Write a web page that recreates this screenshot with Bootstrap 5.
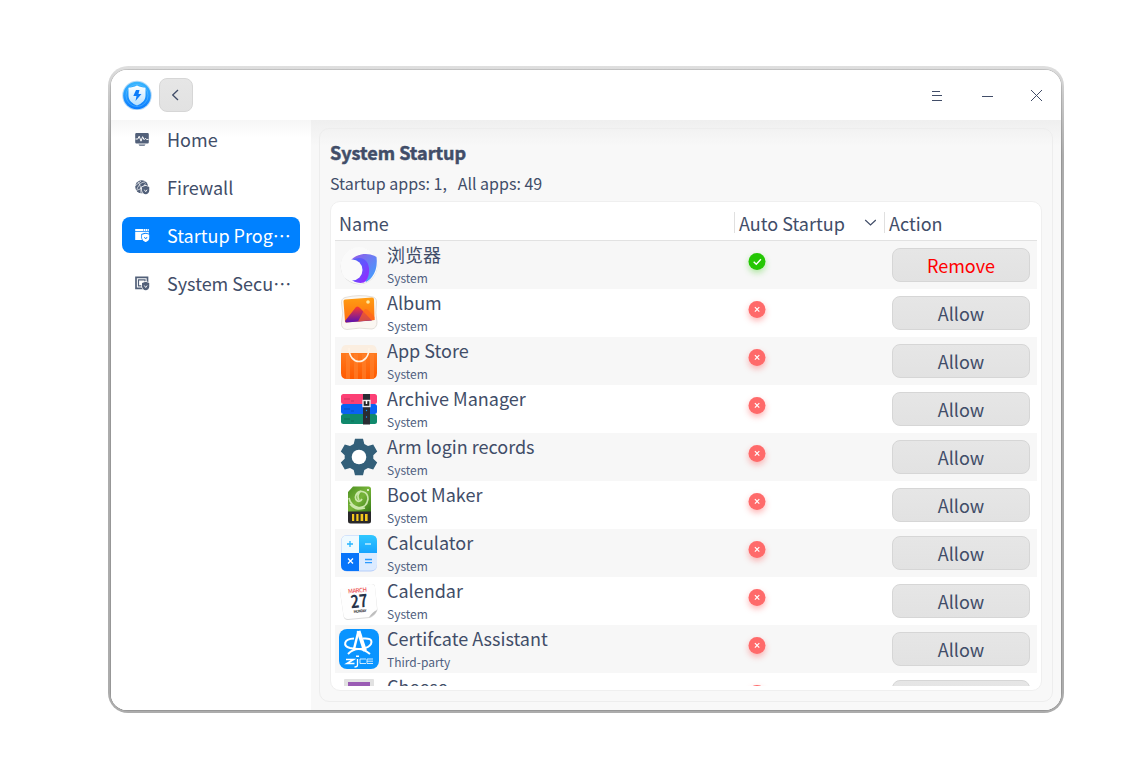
<!DOCTYPE html>
<html lang="en">
<head>
<meta charset="utf-8">
<meta name="viewport" content="width=device-width, initial-scale=1">
<title>System Startup</title>
<link href="https://cdn.jsdelivr.net/npm/bootstrap@5.3.0/dist/css/bootstrap.min.css" rel="stylesheet">
<style>
body{background:#fff;font-family:"Noto Sans CJK SC","Noto Sans",sans-serif;color:#414d68;font-size:18px;height:781px;overflow:hidden}
svg{display:block;flex:none}
.win{width:950px;height:640px;margin:70px 0 0 111px;border-radius:17px;background:#fff;box-shadow:0 0 0 1px rgba(0,0,0,.12)}
.ring{position:absolute;left:108px;top:66px;width:956px;height:647px;border-radius:20px;background:linear-gradient(#dfdfdf 0,#c8c8c8 30px,#acacac 90px,#acacac)}
.win-in{border-radius:16px;overflow:hidden;position:relative;height:640px;background:#f8f8f8}
.titlebar{height:50px;background:#fff;padding-left:11px;position:relative}
.btn-g{background:linear-gradient(#e6e6e6,#e2e2e2);border:1px solid #d6d6d6;border-radius:8px;color:#414d68;padding:0}
.btn-back{width:34px;height:34px;margin-left:7px}
.main{height:590px;background:linear-gradient(#efefef,#f8f8f8 26px)}
.side{width:200px;background:linear-gradient(#f6f6f6,#fff 18px);padding:1px 11px}
.side .nav-link{height:36px;margin-bottom:12px;padding:0 0 0 12px;border-radius:8px;color:#414d68;font-size:18px;line-height:36px;white-space:nowrap}
.side .nav-link.active{background:#0081ff;color:#fff}
.side .nav-link svg{margin:0 17px 0 0}
.pane{margin:8px 8px 8px 8px;width:734px;height:574px;border:1px solid #ededed;border-radius:10px;padding:0 10px}
.pane h1{font-size:18px;font-weight:700;-webkit-text-stroke:.5px #414d68;line-height:28px;margin:9px 0 0}
.sub1{font-size:16px;line-height:24px;margin-top:5px;white-space:pre}
.sheet{width:712px;height:490px;margin-top:6px;border:1px solid #efefef;border-radius:10px;background:#fff;padding:6px 4px 4px}
.thead{height:33px;border-bottom:1px solid #e2e2e2;line-height:31px}
.thead>div{height:32px}
.c1{width:399px;padding-left:4px}.c2{width:150px;padding-left:4px}.c3{padding-left:4px}
.vl{border-left:1px solid #e0e0e0;height:21px!important;margin-top:4px;line-height:23px}
.rows{height:445px;overflow:hidden}
.r{height:48px}
.r:nth-child(odd){background:#f7f7f7}
.nm{width:348px;margin-left:8px}
.nm div{line-height:27px;height:28px}
.nm small{display:block;font-size:12px;line-height:18px;color:#4f5f80}
.ic{width:40px;height:40px;margin:4px 0 0 4px}
.st{width:157px;padding:9px 0 0 10px}
.st svg{overflow:visible}
.ok{filter:drop-shadow(0 3px 3px rgba(40,200,0,.35))}
.no{filter:drop-shadow(0 3px 3px rgba(255,90,90,.45))}
.act{width:138px;height:34px;margin-top:7px;line-height:33px;font-size:18px}
.act.rm,.act.rm:hover{color:#ff0000}
</style>
</head>
<body>
<svg width="0" height="0" class="position-absolute">
<defs>
<symbol id="ok" viewBox="0 0 24 24"><circle cx="12" cy="11.500" r="8.500" fill="#24c703"/><path d="M8.700 11.700l2.600 2.600 4.600-5" fill="none" stroke="#fff" stroke-width="1.400"/></symbol>
<symbol id="no" viewBox="0 0 24 24"><circle cx="12" cy="11.500" r="8.500" fill="#ff6a6a"/><path d="M9.900 9.200l4.400 4.400m0-4.400l-4.400 4.400" fill="none" stroke="#fff" stroke-width="1.200"/></symbol>
<linearGradient id="bl" x2="0" y2="1"><stop stop-color="#38b6ff"/><stop offset="1" stop-color="#0a7cff"/></linearGradient>
<linearGradient id="sh" x2="0" y2="1"><stop stop-color="#fff"/><stop offset="1" stop-color="#b5e0ff"/></linearGradient>
<linearGradient id="pu" x1="0" y1="0" x2="1" y2="1"><stop stop-color="#4b6cf5"/><stop offset=".5" stop-color="#6650ff"/><stop offset="1" stop-color="#a21cff"/></linearGradient>
<linearGradient id="pb" x1="0" y1="0" x2="1" y2="1"><stop stop-color="#9a55e8"/><stop offset="1" stop-color="#38a7ff"/></linearGradient>
<linearGradient id="or" x2="0" y2="1"><stop stop-color="#ff9d12"/><stop offset="1" stop-color="#ff6a12"/></linearGradient>
<linearGradient id="mt" x2="0" y2="1"><stop stop-color="#ff3b2d"/><stop offset="1" stop-color="#5810b5"/></linearGradient>
<linearGradient id="gn" x2="1" y2="1"><stop stop-color="#4c8f20"/><stop offset=".5" stop-color="#78b53a"/><stop offset="1" stop-color="#357a14"/></linearGradient>
<linearGradient id="cb" x2="0" y2="1"><stop stop-color="#31c8ff"/><stop offset="1" stop-color="#18a4ff"/></linearGradient>
<linearGradient id="ba" x2="0" y2="1"><stop stop-color="#ff7a1e"/><stop offset="1" stop-color="#ff5a00"/></linearGradient>
<symbol id="mini" viewBox="0 0 8 9"><path d="M4 0L7.800 1.300V4.500C7.800 6.800 6 8.200 4 9 2 8.200.2 6.800.2 4.500V1.300Z"/></symbol>
</defs>
</svg>
<div class="ring"></div>
<div class="win position-relative">
<div class="win-in">
<header class="titlebar d-flex align-items-center">
<svg width="30" height="30" viewBox="0 0 30 30"><circle cx="15" cy="15.500" r="14.800" fill="#b8daf6"/><circle cx="15" cy="15.500" r="13.800" fill="url(#bl)"/><circle cx="15" cy="15.500" r="11" fill="none" stroke="#75caff" stroke-width=".7" opacity=".6"/><path d="M15 5.500c3 1.500 5.500 2 8.500 2.200V15.500c0 5-4 8.200-8.500 10C10.500 23.700 6.500 20.500 6.500 15.500V7.700C9.500 7.500 12 7 15 5.500Z" fill="url(#sh)"/><path d="M14 10h3.500l-1 4h3L13.500 21l1-5H11.300Z" fill="#0d7dfa"/></svg>
<button class="btn btn-g btn-back d-flex align-items-center justify-content-center" aria-label="Back"><svg width="12" height="14" viewBox="0 0 12 14"><path d="M8 2L2.700 7 8 12" fill="none" stroke="#414d68" stroke-width="1.300"/></svg></button>
<svg class="ms-auto" width="130" height="50" viewBox="0 0 130 50" shape-rendering="crispEdges" fill="#414d68"><path d="M1 21h8v1H1zM1 25h10v1H1zM1 30h10v1H1zM51 26h11v1H51z"/><path d="M100 20l11 11m0-11l-11 11" stroke="#414d68" fill="none" shape-rendering="auto"/></svg>
</header>
<div class="main d-flex">
<nav class="side nav flex-column flex-nowrap">
<a class="nav-link d-flex align-items-center"><svg width="16" height="16" viewBox="0 0 16 16" fill="#526079"><path d="M2.500 2h11a1.300 1.300 0 0 1 1.300 1.300v7.900a1.300 1.300 0 0 1-1.300 1.300h-11a1.300 1.300 0 0 1-1.300-1.300V3.300A1.300 1.300 0 0 1 2.500 2ZM4.500 13.600h7l-1 1.200h-5Z"/><path d="M1.500 8h2.300l1.400-2.800 1.800 5L8.600 5.700l1.500 3 1.200-1.300 1.300 1h1.900" fill="none" stroke="#fff"/></svg>Home</a>
<a class="nav-link d-flex align-items-center"><svg width="16" height="16" viewBox="0 0 16 16"><circle cx="7.700" cy="7.800" r="6.500" fill="#526079"/><path d="M1 7l6-5M3 10c2-5 5-7 8-7M1.500 11.500c5-1 8-3 10-7M4 3c2 2 3 6 3 11" fill="none" stroke="#fff" stroke-width=".7"/><use href="#mini" x="7" y="6" width="9" height="10" fill="#fff"/><use href="#mini" x="7.800" y="6.800" width="7.800" height="8.700" fill="#526079"/><path d="M10.300 10.700l1.400 2 1.400-2" fill="none" stroke="#fff" stroke-width=".9"/></svg>Firewall</a>
<a class="nav-link active d-flex align-items-center"><svg width="16" height="16" viewBox="0 0 16 16"><path d="M1.200 2h13.600v2H1.200zM1.200 4.700h13.600v8.300H1.200z" fill="#fff"/><path d="M9 3h1m1 0h1m1 0h1" stroke="#0081ff"/><use href="#mini" x="7" y="5.500" width="9" height="10" fill="#0081ff"/><use href="#mini" x="7.800" y="6.400" width="7.800" height="8.700" fill="#fff"/><path d="M10.300 10l1.400 2 1.400-2" fill="none" stroke="#0081ff" stroke-width=".9"/></svg>Startup Prog<span lang="zh-CN">…</span></a>
<a class="nav-link d-flex align-items-center"><svg width="16" height="16" viewBox="0 0 16 16"><path d="M2 2.300h11.500v11H2z" fill="none" stroke="#526079" stroke-width="1.700"/><path d="M4.500 4.800h6.500v6H4.500z" fill="none" stroke="#526079" stroke-width="1.200"/><use href="#mini" x="7" y="6" width="9" height="10" fill="#fff"/><use href="#mini" x="7.800" y="6.800" width="7.800" height="8.700" fill="#526079"/><path d="M10.300 10.500l1.400 2 1.400-2" fill="none" stroke="#fff" stroke-width=".9"/></svg>System Secu<span lang="zh-CN">…</span></a>
</nav>
<section class="pane">
<h1>System Startup</h1>
<div class="sub1">Startup apps: 1,   All apps: 49</div>
<div class="sheet">
<div class="thead d-flex"><div class="c1">Name</div><div class="c2 vl d-flex">Auto Startup<svg class="ms-auto me-2" width="12" height="20" viewBox="0 0 12 20"><path d="M1.200 8l5.300 5 5.300-5" fill="none" stroke="#414d68" stroke-width="1.200"/></svg></div><div class="c3 vl">Action</div></div>
<div class="rows">

<div class="r d-flex"><svg class="ic" viewBox="0 0 40 40"><circle cx="20" cy="21" r="18.300" fill="#d0d0d0"/><circle cx="20" cy="20.500" r="18.400" fill="#fafafa"/><path d="M11 16.500C17 8 30 7 37.500 12c1.500 12-3 21-10.500 25Z" fill="url(#pb)"/><path d="M11 16.500C23 8 31 16 30 27c-.5 5-2 8-5 10.500-6 1.500-11-1-13-3.500Z" fill="url(#pu)"/><circle cx="13" cy="25" r="10.500" fill="#fafafa"/></svg><div class="nm"><div>浏览器</div><small>System</small></div><div class="st"><svg class="ok" width="24" height="24"><use href="#ok"/></svg></div><button class="btn btn-g act rm">Remove</button></div>

<div class="r d-flex"><svg class="ic" viewBox="0 0 40 40"><path d="M6 4.500Q20 1 34 4Q38 5 37.500 10Q36 20 38 29Q38 35 33 36Q20 34 8 36.500Q2 36 2.500 30Q5 20 2.500 10Q2 6 6 4.500Z" fill="#fbf7f2" stroke="#ddd8d2" stroke-width=".8"/><path d="M4.500 8.500Q4.500 6.500 6 6.500L33 4.500Q35 4.500 35 6.500L35.500 27 7 29.500Q6 29.500 6 28.500Z" fill="url(#or)"/><path d="M6 28L17 14Q19 12.500 21 15L33 27.500 7 29.500Z" fill="url(#mt)"/><path d="M19 28.500L25 17Q27 14.500 30 18L35.500 24V27Z" fill="#ff651f" opacity=".7"/><circle cx="29" cy="9" r="1.800" fill="#ffe8a0"/></svg><div class="nm"><div>Album</div><small>System</small></div><div class="st"><svg class="no" width="24" height="24"><use href="#no"/></svg></div><button class="btn btn-g act">Allow</button></div>

<div class="r d-flex"><svg class="ic" viewBox="0 0 40 40"><path d="M2 12Q2 4 7 4H33Q38 4 38 12Z" fill="#fbeee0"/><path d="M2 12H38V32Q38 38 32 38H8Q2 38 2 32Z" fill="url(#ba)"/><path d="M7 13h4v25H7zM15 13h4v25h-4zM23 13h4v25h-4zM31 13h4v25h-4z" fill="#ff8430" opacity=".6"/><path d="M10 7C10 25 30 25 30 7" fill="none" stroke="#fff3e4" stroke-width="1.600"/></svg><div class="nm"><div>App Store</div><small>System</small></div><div class="st"><svg class="no" width="24" height="24"><use href="#no"/></svg></div><button class="btn btn-g act">Allow</button></div>

<div class="r d-flex"><svg class="ic" viewBox="0 0 40 40"><rect x="2" y="5" width="36" height="10" rx="2.500" fill="#fc4075"/><rect x="2" y="15" width="36" height="10" rx="2.500" fill="#0b62f2"/><rect x="2" y="25" width="36" height="10" rx="2.500" fill="#10896c"/><path d="M5 10h6M12 12h3M5 20h6M12 22h3M5 30h6M12 32h3" stroke="#0003" stroke-width="1"/><path d="M24 5h7v30.500h-7z" fill="#2a2c33"/><rect x="24" y="11.500" width="7" height="6" fill="#222" stroke="#e8e8e8" stroke-width="1.400"/><path d="M27.500 11v4" stroke="#fff" stroke-width="1.500"/><circle cx="27.500" cy="21.500" r=".7" fill="#1a9cff"/><circle cx="27.500" cy="28" r=".7" fill="#1a9cff"/></svg><div class="nm"><div>Archive Manager</div><small>System</small></div><div class="st"><svg class="no" width="24" height="24"><use href="#no"/></svg></div><button class="btn btn-g act">Allow</button></div>

<div class="r d-flex"><svg class="ic" viewBox="0 0 40 40"><path d="M16 1.700h8l1.300 5.200 3.700 2.100 5.200-1.400 4 7-3.900 3.700v3.400l3.900 3.700-4 7-5.200-1.400-3.700 2.100L24 38.300h-8l-1.300-5.200-3.700-2.100-5.200 1.400-4-7 3.900-3.700v-3.400L1.800 14.600l4-7L11 9l3.700-2.100Z" fill="#335f79"/><circle cx="20" cy="20" r="7.300" fill="#fff"/></svg><div class="nm"><div>Arm login records</div><small>System</small></div><div class="st"><svg class="no" width="24" height="24"><use href="#no"/></svg></div><button class="btn btn-g act">Allow</button></div>

<div class="r d-flex"><svg class="ic" viewBox="0 0 40 40"><path d="M14 1.500H29.500Q32 1.500 32 4V27H9V7Z" fill="url(#gn)"/><path d="M9 26.500H32V36Q32 38.500 29.500 38.500H11.500Q9 38.500 9 36Z" fill="#29282a"/><path d="M13 29h2.200v7H13zM17.300 29h2.200v7h-2.200zM21.600 29h2.600v7h-2.600zM26 29h2.600v7H26z" fill="#f4c81d"/><path d="M10 13C12 24 27 27 29 14 29 6 20 4 17 10 15 15 20 19 23 14M22 6C19 8 18 12 20 15M11 19C17 26 22 24 26 23" fill="none" stroke="#cbe7aa" stroke-width="1.700"/><circle cx="29" cy="5" r="1" fill="#fff"/></svg><div class="nm"><div>Boot Maker</div><small>System</small></div><div class="st"><svg class="no" width="24" height="24"><use href="#no"/></svg></div><button class="btn btn-g act">Allow</button></div>

<div class="r d-flex"><svg class="ic" viewBox="0 0 40 40"><rect x="2" y="2" width="36" height="36.500" rx="6" fill="#b5cdfa"/><path d="M8 2.500H20V20H2.500V8Q2.500 2.500 8 2.500Z" fill="#effaff"/><path d="M20 2H32Q38 2 38 8V20H20Z" fill="url(#cb)"/><path d="M2 20H20V38H8Q2 38 2 32Z" fill="#0875fa"/><path d="M20 20H38V31Q38 37.500 32 37.500H20Z" fill="#dcebff"/><path d="M8 11h6M11 8v6" stroke="#26b5ff" stroke-width="1.300"/><path d="M26 11h6" stroke="#d9f4ff" stroke-width="1.300"/><path d="M9 25.500l5 5m0-5l-5 5" stroke="#fff" stroke-width="1.300"/><path d="M26 26.500h7M26 29.700h7" stroke="#2b9aff" stroke-width="1.300"/></svg><div class="nm"><div>Calculator</div><small>System</small></div><div class="st"><svg class="no" width="24" height="24"><use href="#no"/></svg></div><button class="btn btn-g act">Allow</button></div>

<div class="r d-flex"><svg class="ic" viewBox="0 0 40 40"><path d="M3 8L33 3Q36 3 36 6L38.500 29Q36 35 31 37L9 39Q5 39 4.500 35L1 11Q1 8 3 8Z" fill="#dcdcdc"/><path d="M3 7L32 3Q35.500 3 36 6L38 28Q36 34 30 36L9 38Q5 38 4.500 34L1 10Q1 7 3 7Z" fill="#fefefe"/><path d="M30 36.500Q33 31 38 29 37 34 30 36.500Z" fill="#bdbdbd"/><g transform="rotate(-6 20 20)" text-anchor="middle" font-weight="700"><text x="19.500" y="11.500" font-size="6" fill="#ef5a5a" textLength="19" font-weight="500">MARCH</text><text x="20" y="26.500" font-size="18" fill="#27334b" textLength="17" lengthAdjust="spacingAndGlyphs">27</text><text x="20" y="31.500" font-size="3.600" fill="#333" textLength="13">MONDAY</text></g></svg><div class="nm"><div>Calendar</div><small>System</small></div><div class="st"><svg class="no" width="24" height="24"><use href="#no"/></svg></div><button class="btn btn-g act">Allow</button></div>

<div class="r d-flex"><svg class="ic" viewBox="0 0 40 40"><rect width="40" height="40" rx="8" fill="#0a94ff"/><g fill="none" stroke="#fff"><path d="M19.500 2L15 20" stroke-width="2.500"/><path d="M19.500 2L26 22" stroke-width="4"/><path d="M15 9.500C4 10 4 17 11 19 20 21 29 20 32 15 34 10 29 9 24 9.500" stroke-width="2"/><path d="M9 25Q19 15 31 25" stroke-width="2"/><path d="M7 30.500h7.500l-6.500 4h7.500" stroke-width="1.600"/><path d="M18.500 30V36q0 2-3 2" stroke-width="1.300"/><path d="M27 30h-6v4.500h6M34 30h-6v4.500h6M28 32.200h6" stroke-width=".8"/></g><path d="M17 26.500h3v1.500h-3z" fill="#fff"/></svg><div class="nm"><div>Certifcate Assistant</div><small>Third-party</small></div><div class="st"><svg class="no" width="24" height="24"><use href="#no"/></svg></div><button class="btn btn-g act">Allow</button></div>

<div class="r d-flex"><svg class="ic" viewBox="0 0 40 40"><rect x="5" y="2" width="30" height="36" rx="1" fill="#e2e2e2"/><path d="M9 5h22v30H9z" fill="#9a5cb4"/></svg><div class="nm"><div>Cheese</div><small>System</small></div><div class="st"><svg class="no" width="24" height="24"><use href="#no"/></svg></div><button class="btn btn-g act">Allow</button></div>

</div>
</div>
</section>
</div>
</div>
</div>
<script src="https://cdn.jsdelivr.net/npm/bootstrap@5.3.0/dist/js/bootstrap.bundle.min.js"></script>
</body>
</html>
